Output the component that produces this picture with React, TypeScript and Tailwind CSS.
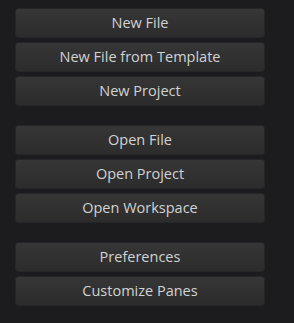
const groups = [
  ['New File', 'New File from Template', 'New Project'],
  ['Open File', 'Open Project', 'Open Workspace'],
  ['Preferences', 'Customize Panes'],
];

export default function App() {
  return (
    <div
      className="w-[294px] h-[323px] bg-[#1c1c1e] pt-[8px] pl-[15px] flex flex-col gap-[19px]"
      style={{fontFamily: '"Open Sans", "Noto Sans", sans-serif'}}
    >
      {groups.map((group, i) => (
        <div key={i} className="flex flex-col gap-[4px]">
          {group.map((label) => (
            <button
              key={label}
              className="w-[250px] h-[30px] rounded-[3px] border border-[#262628] bg-gradient-to-b from-[#363636] to-[#2c2c2c] text-[#d2d2d2] text-[14.5px] leading-none pt-[1px]"
            >
              {label}
            </button>
          ))}
        </div>
      ))}
    </div>
  );
}
